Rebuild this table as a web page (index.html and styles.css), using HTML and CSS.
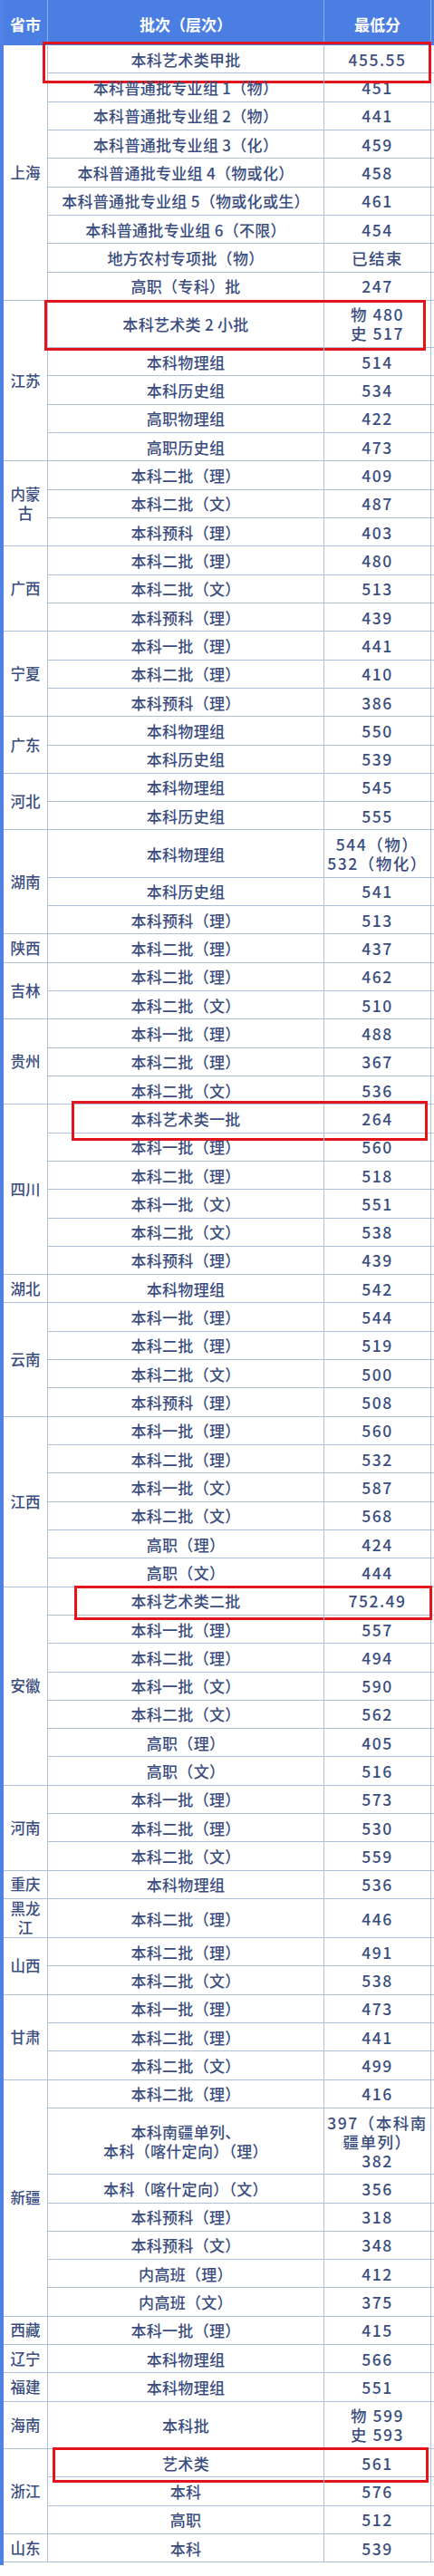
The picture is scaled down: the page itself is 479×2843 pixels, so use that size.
FILE: index.html
```html
<!DOCTYPE html>
<html lang="zh-CN">
<head>
<meta charset="utf-8">
<title>各省市录取最低分</title>
<link rel="stylesheet" href="styles.css">
</head>
<body>
<div class="sheet">
<table class="scores">
<colgroup><col class="c-prov"><col class="c-batch"><col class="c-score"><col class="c-extra"></colgroup>
<thead>
<tr><th>省市</th><th>批次（层次）</th><th>最低分</th><th></th></tr>
</thead>
<tbody>
<tr><td class="prov" rowspan="9">上海</td><td class="batch"><span class="mark m1"></span>本科艺术类甲批</td><td class="score">455.55</td><td></td></tr>
<tr><td class="batch">本科普通批专业组 1（物）</td><td class="score">451</td><td></td></tr>
<tr><td class="batch">本科普通批专业组 2（物）</td><td class="score">441</td><td></td></tr>
<tr><td class="batch">本科普通批专业组 3（化）</td><td class="score">459</td><td></td></tr>
<tr><td class="batch">本科普通批专业组 4（物或化）</td><td class="score">458</td><td></td></tr>
<tr><td class="batch">本科普通批专业组 5（物或化或生）</td><td class="score">461</td><td></td></tr>
<tr><td class="batch">本科普通批专业组 6（不限）</td><td class="score">454</td><td></td></tr>
<tr><td class="batch">地方农村专项批（物）</td><td class="score">已结束</td><td></td></tr>
<tr><td class="batch">高职（专科）批</td><td class="score">247</td><td></td></tr>

<tr><td class="prov" rowspan="5">江苏</td><td class="batch"><span class="mark m2"></span>本科艺术类 2 小批</td><td class="score">物 480<br>史 517</td><td></td></tr>
<tr><td class="batch">本科物理组</td><td class="score">514</td><td></td></tr>
<tr><td class="batch">本科历史组</td><td class="score">534</td><td></td></tr>
<tr><td class="batch">高职物理组</td><td class="score">422</td><td></td></tr>
<tr><td class="batch">高职历史组</td><td class="score">473</td><td></td></tr>

<tr><td class="prov" rowspan="3">内蒙古</td><td class="batch">本科二批（理）</td><td class="score">409</td><td></td></tr>
<tr><td class="batch">本科二批（文）</td><td class="score">487</td><td></td></tr>
<tr><td class="batch">本科预科（理）</td><td class="score">403</td><td></td></tr>

<tr><td class="prov" rowspan="3">广西</td><td class="batch">本科二批（理）</td><td class="score">480</td><td></td></tr>
<tr><td class="batch">本科二批（文）</td><td class="score">513</td><td></td></tr>
<tr><td class="batch">本科预科（理）</td><td class="score">439</td><td></td></tr>

<tr><td class="prov" rowspan="3">宁夏</td><td class="batch">本科一批（理）</td><td class="score">441</td><td></td></tr>
<tr><td class="batch">本科二批（理）</td><td class="score">410</td><td></td></tr>
<tr><td class="batch">本科预科（理）</td><td class="score">386</td><td></td></tr>

<tr><td class="prov" rowspan="2">广东</td><td class="batch">本科物理组</td><td class="score">550</td><td></td></tr>
<tr><td class="batch">本科历史组</td><td class="score">539</td><td></td></tr>

<tr><td class="prov" rowspan="2">河北</td><td class="batch">本科物理组</td><td class="score">545</td><td></td></tr>
<tr><td class="batch">本科历史组</td><td class="score">555</td><td></td></tr>

<tr><td class="prov" rowspan="3">湖南</td><td class="batch">本科物理组</td><td class="score">544（物）<br>532（物化）</td><td></td></tr>
<tr><td class="batch">本科历史组</td><td class="score">541</td><td></td></tr>
<tr><td class="batch">本科预科（理）</td><td class="score">513</td><td></td></tr>

<tr><td class="prov">陕西</td><td class="batch">本科二批（理）</td><td class="score">437</td><td></td></tr>

<tr><td class="prov" rowspan="2">吉林</td><td class="batch">本科二批（理）</td><td class="score">462</td><td></td></tr>
<tr><td class="batch">本科二批（文）</td><td class="score">510</td><td></td></tr>

<tr><td class="prov" rowspan="3">贵州</td><td class="batch">本科一批（理）</td><td class="score">488</td><td></td></tr>
<tr><td class="batch">本科二批（理）</td><td class="score">367</td><td></td></tr>
<tr><td class="batch">本科二批（文）</td><td class="score">536</td><td></td></tr>

<tr><td class="prov" rowspan="6">四川</td><td class="batch"><span class="mark m3"></span>本科艺术类一批</td><td class="score">264</td><td></td></tr>
<tr><td class="batch">本科一批（理）</td><td class="score">560</td><td></td></tr>
<tr><td class="batch">本科二批（理）</td><td class="score">518</td><td></td></tr>
<tr><td class="batch">本科一批（文）</td><td class="score">551</td><td></td></tr>
<tr><td class="batch">本科二批（文）</td><td class="score">538</td><td></td></tr>
<tr><td class="batch">本科预科（理）</td><td class="score">439</td><td></td></tr>

<tr><td class="prov">湖北</td><td class="batch">本科物理组</td><td class="score">542</td><td></td></tr>

<tr><td class="prov" rowspan="4">云南</td><td class="batch">本科一批（理）</td><td class="score">544</td><td></td></tr>
<tr><td class="batch">本科二批（理）</td><td class="score">519</td><td></td></tr>
<tr><td class="batch">本科二批（文）</td><td class="score">500</td><td></td></tr>
<tr><td class="batch">本科预科（理）</td><td class="score">508</td><td></td></tr>

<tr><td class="prov" rowspan="6">江西</td><td class="batch">本科一批（理）</td><td class="score">560</td><td></td></tr>
<tr><td class="batch">本科二批（理）</td><td class="score">532</td><td></td></tr>
<tr><td class="batch">本科一批（文）</td><td class="score">587</td><td></td></tr>
<tr><td class="batch">本科二批（文）</td><td class="score">568</td><td></td></tr>
<tr><td class="batch">高职（理）</td><td class="score">424</td><td></td></tr>
<tr><td class="batch">高职（文）</td><td class="score">444</td><td></td></tr>

<tr><td class="prov" rowspan="7">安徽</td><td class="batch"><span class="mark m4"></span>本科艺术类二批</td><td class="score">752.49</td><td></td></tr>
<tr><td class="batch">本科一批（理）</td><td class="score">557</td><td></td></tr>
<tr><td class="batch">本科二批（理）</td><td class="score">494</td><td></td></tr>
<tr><td class="batch">本科一批（文）</td><td class="score">590</td><td></td></tr>
<tr><td class="batch">本科二批（文）</td><td class="score">562</td><td></td></tr>
<tr><td class="batch">高职（理）</td><td class="score">405</td><td></td></tr>
<tr><td class="batch">高职（文）</td><td class="score">516</td><td></td></tr>

<tr><td class="prov" rowspan="3">河南</td><td class="batch">本科一批（理）</td><td class="score">573</td><td></td></tr>
<tr><td class="batch">本科二批（理）</td><td class="score">530</td><td></td></tr>
<tr><td class="batch">本科二批（文）</td><td class="score">559</td><td></td></tr>

<tr><td class="prov">重庆</td><td class="batch">本科物理组</td><td class="score">536</td><td></td></tr>

<tr><td class="prov">黑龙江</td><td class="batch">本科二批（理）</td><td class="score">446</td><td></td></tr>

<tr><td class="prov" rowspan="2">山西</td><td class="batch">本科二批（理）</td><td class="score">491</td><td></td></tr>
<tr><td class="batch">本科二批（文）</td><td class="score">538</td><td></td></tr>

<tr><td class="prov" rowspan="3">甘肃</td><td class="batch">本科一批（理）</td><td class="score">473</td><td></td></tr>
<tr><td class="batch">本科二批（理）</td><td class="score">441</td><td></td></tr>
<tr><td class="batch">本科二批（文）</td><td class="score">499</td><td></td></tr>

<tr><td class="prov" rowspan="7">新疆</td><td class="batch">本科二批（理）</td><td class="score">416</td><td></td></tr>
<tr><td class="batch">本科南疆单列、<br>本科（喀什定向）（理）</td><td class="score">397（本科南<br>疆单列）<br>382</td><td></td></tr>
<tr><td class="batch">本科（喀什定向）（文）</td><td class="score">356</td><td></td></tr>
<tr><td class="batch">本科预科（理）</td><td class="score">318</td><td></td></tr>
<tr><td class="batch">本科预科（文）</td><td class="score">348</td><td></td></tr>
<tr><td class="batch">内高班（理）</td><td class="score">412</td><td></td></tr>
<tr><td class="batch">内高班（文）</td><td class="score">375</td><td></td></tr>

<tr><td class="prov">西藏</td><td class="batch">本科一批（理）</td><td class="score">415</td><td></td></tr>
<tr><td class="prov">辽宁</td><td class="batch">本科物理组</td><td class="score">566</td><td></td></tr>
<tr><td class="prov">福建</td><td class="batch">本科物理组</td><td class="score">551</td><td></td></tr>
<tr><td class="prov">海南</td><td class="batch">本科批</td><td class="score">物 599<br>史 593</td><td></td></tr>

<tr><td class="prov" rowspan="3">浙江</td><td class="batch"><span class="mark m5"></span>艺术类</td><td class="score">561</td><td></td></tr>
<tr><td class="batch">本科</td><td class="score">576</td><td></td></tr>
<tr><td class="batch">高职</td><td class="score">512</td><td></td></tr>

<tr><td class="prov">山东</td><td class="batch">本科</td><td class="score">539</td><td></td></tr>
</tbody>
</table>
</div>
</body>
</html>
```

FILE: styles.css
```css
html, body {
  margin: 0;
  padding: 0;
  background: #ffffff;
}

body {
  width: 479px;
  font-family: "Noto Sans CJK SC", "Noto Sans", sans-serif;
  color: #3a4d7e;
}

.sheet {
  width: 475px;
  border-left: 4px solid #4f82e4;
  overflow: hidden;
  padding-bottom: 3px;
}

.scores {
  border-collapse: separate;
  border-spacing: 0;
  table-layout: fixed;
  width: 492px;
}

.c-prov { width: 49px; }
.c-batch { width: 305px; }
.c-score { width: 118px; }
.c-extra { width: 20px; }

.scores th {
  background: #4b7ee3;
  color: #ffffff;
  font-size: 17px;
  font-weight: 700;
  line-height: 21px;
  padding: 16px 0 13px;
  text-align: center;
  border-right: 1px solid #8fb0f0;
}

.scores th:last-child {
  border-right: none;
}

.scores td {
  padding: 4.67px 0;
  line-height: 21px;
  font-size: 17px;
  font-weight: 500;
  text-align: center;
  vertical-align: middle;
  border-right: 1px solid #b0bfdc;
  border-bottom: 1px solid #b0bfdc;
}

.scores td:last-child {
  border-right: none;
}

.scores td.prov {
  font-size: 16.5px;
  padding: 0 6px;
}

.scores td.batch {
  position: relative;
  letter-spacing: 0.3px;
}

.scores td.score {
  font-size: 17.5px;
  letter-spacing: 1.5px;
}

.mark {
  position: absolute;
  box-sizing: border-box;
  border: 3px solid #e3141c;
  pointer-events: none;
}

.m1 { left: -6px; top: -4px; width: 429px; height: 46px; }
.m2 { left: -4px; top: -1px; width: 421px; height: 56px; }
.m3 { left: 26px; top: -4px; width: 393px; height: 44px; }
.m4 { left: 29px; top: -2px; width: 395px; height: 38px; }
.m5 { left: 5px; top: -2px; width: 415px; height: 39px; }
```
